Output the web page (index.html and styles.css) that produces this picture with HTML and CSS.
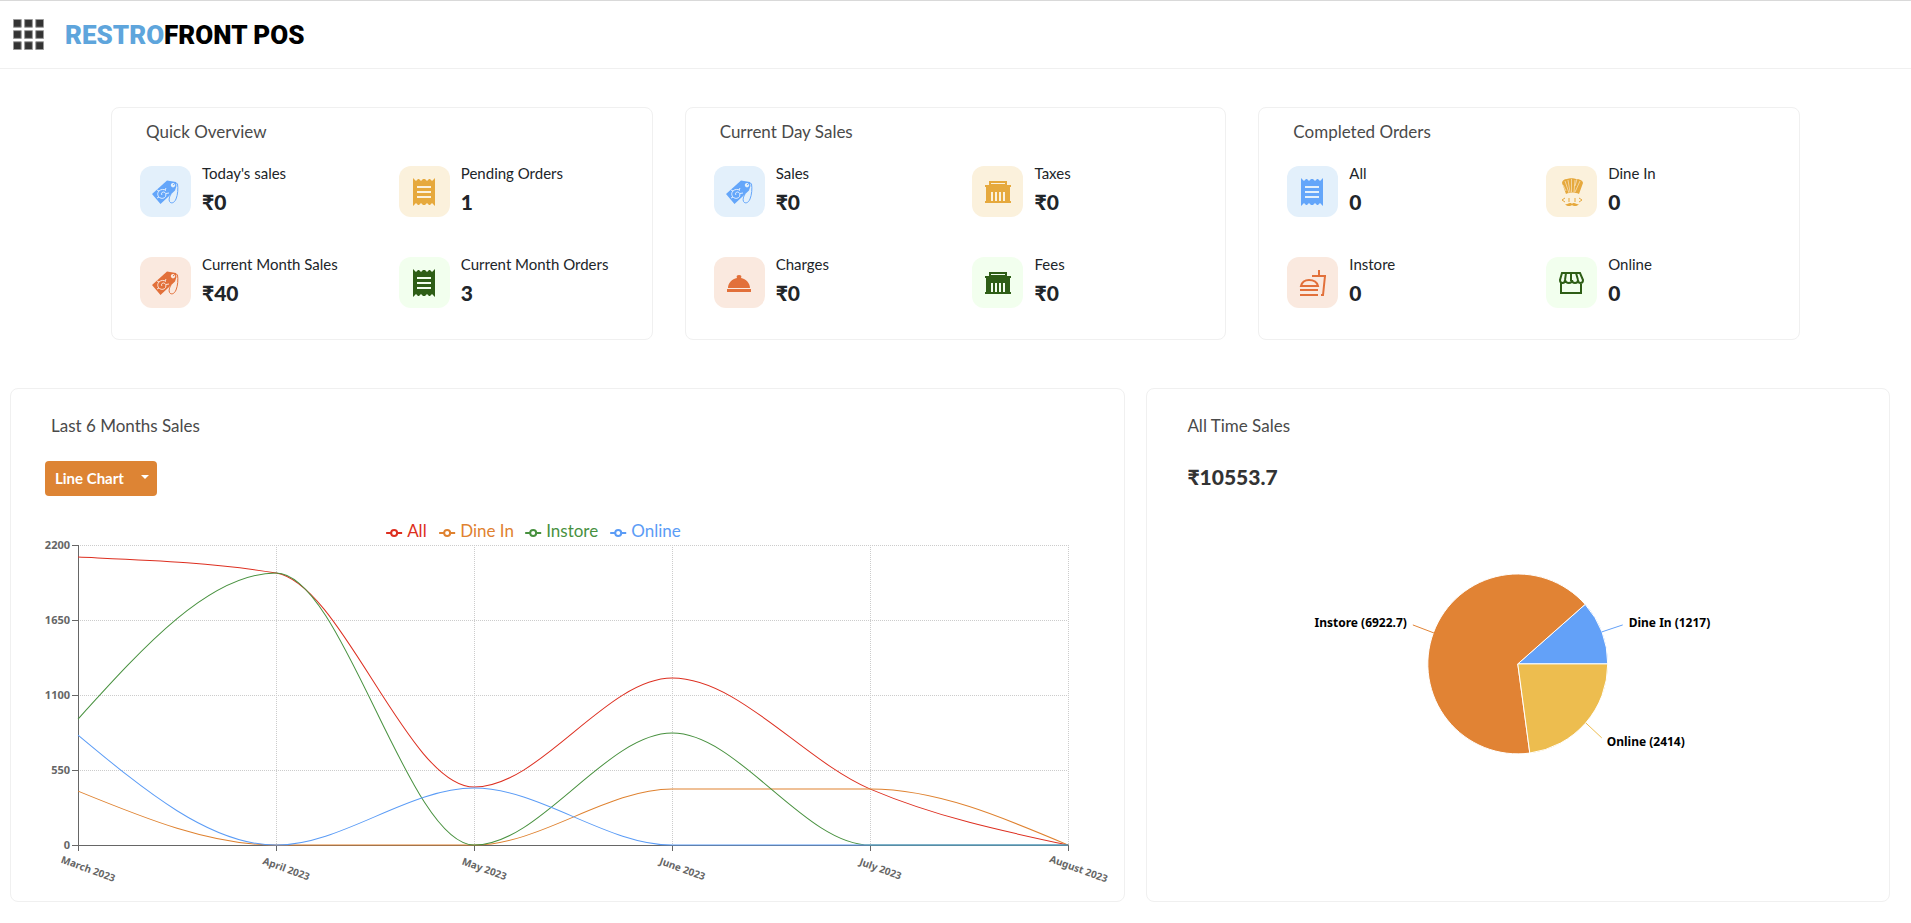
FILE: index.html
```
<!DOCTYPE html>
<html lang="en">
<head>
    <meta charset="UTF-8">
    <meta name="viewport" content="width=device-width, initial-scale=1.0">
    <title>Restrofront POS</title>
    <link rel="stylesheet" href="styles.css">
</head>
<body>
    <!-- icons shared by the tiles -->
    <svg class="sprite" aria-hidden="true">
        <symbol id="tag" viewBox="0 0 51 51">
            <path fill="currentColor" fill-rule="evenodd" d="M12 28 27 14.5 36 16 36.5 20 35 24.5 20.5 38ZM33 17a2.2 2.2 0 1 0 .01 0Z"/>
            <path class="cut" d="M26 24.5c-2-1.5-5-1.5-7 .5s-1.5 5 .5 6.5 5 1 6-1 0-4.5-2-4.5-2.5 2-1.5 3M17 24l2 1M26 22l-1 2M17 32l2-1M29 27l-3 .5"/>
            <path class="line thin" d="M33 19c2-2 4-2.5 4.5-1 .8 4 .3 11-1.5 15-1.5 4-5 5-6.5 2.5-1-2 0-5 1.5-7.5"/>
        </symbol>
        <symbol id="receipt" viewBox="0 0 51 51">
            <path fill="currentColor" fill-rule="evenodd" d="M14 12l3 3 2-2h1l2 2 2-2h2l2 2 2-2h1l2 2 3-3v28l-3-3-2 2h-1l-2-2-2 2h-2l-2-2-2 2h-1l-2-2-3 3ZM18 20v2h14v-2ZM18 25v2h14v-2ZM18 30v2h14v-2Z"/>
        </symbol>
        <symbol id="bank" viewBox="0 0 51 51">
            <path fill="currentColor" fill-rule="evenodd" d="M17 15h18v4h4v2h-1v14h1v2H13v-2h1V21h-1v-2h4ZM19 17v1h14v-1ZM19 26v9h2v-9ZM23 26v9h2v-9ZM27 26v9h2v-9ZM31 26v9h2v-9Z"/>
        </symbol>
        <symbol id="cloche" viewBox="0 0 51 51">
            <path fill="currentColor" d="M14 31c0-5 4-9 9-10-1-2 0-3 2-3s3 1 2 3c5 1 9 5 9 10ZM13 32h24v3H13Z"/>
        </symbol>
        <symbol id="chef" viewBox="0 0 51 51">
            <path fill="currentColor" d="M20 28 16 17c0-2 2-4 5-4 2-1 7-1 9 0 4 0 7 2 7 4l-4 11c-4-2-9-2-13 0Z"/>
            <path class="cut faint" d="M19 15l4 12M22 14l2 12M25.5 13v13M29 14l-1 12M34 15l-5 11M31 13l-2 7M17 19l3 6"/>
            <path class="line thin" d="M19 32l-3 2 3 2M33 32l3 2-3 2M22 33h2M28 33h2M22 35h2M28 35h2"/>
            <path fill="currentColor" d="M19 38c2 1 3-1 5-1 1 0 2 .5 2 1 0-.5 1-1 2-1 2 0 3 2 5 1-1 2-5 3-7 1-2 2-6 1-7-1Z"/>
        </symbol>
        <symbol id="fastfood" viewBox="0 0 51 51">
            <path class="line" d="M14 29c1-4 4-6 8-6s8 2 9 6ZM13 33h18M13 38h18M25 19h14M32 13v6M38 19l-2 19h-2"/>
        </symbol>
        <symbol id="store" viewBox="0 0 51 51">
            <path class="line" d="M15 26v10h20V26M16 16h18l3 7c0 4-5 4-5 0 0 4-6 4-6 0 0 4-6 4-7 0 0 4-5 4-5 0ZM20 16l-1 7M25 16v8M30 16l2 7"/>
        </symbol>
    </svg>

    <header class="navbar">
        <button class="menu" aria-label="Open menu">
            <svg width="31" height="31" viewBox="0 0 32 32" fill="#333" stroke="#999">
                <path d="M.5.5h8v8h-8ZM12 .5h8v8h-8ZM23.5.5h8v8h-8ZM.5 12h8v8h-8ZM12 12h8v8h-8ZM23.5 12h8v8h-8ZM.5 23.5h8v8h-8ZM12 23.5h8v8h-8ZM23.5 23.5h8v8h-8Z"/>
            </svg>
        </button>
        <div class="logo"><span>RESTRO</span>FRONT POS</div>
    </header>

    <main>
        <section class="overview">
            <div class="card">
                <h2>Quick Overview</h2>
                <div class="stats">
                    <div class="stat">
                        <svg class="tile blue"><use href="#tag"/></svg>
                        <div><p class="label">Today's sales</p><p class="value">₹0</p></div>
                    </div>
                    <div class="stat">
                        <svg class="tile yellow"><use href="#receipt"/></svg>
                        <div><p class="label">Pending Orders</p><p class="value">1</p></div>
                    </div>
                    <div class="stat">
                        <svg class="tile orange"><use href="#tag"/></svg>
                        <div><p class="label">Current Month Sales</p><p class="value">₹40</p></div>
                    </div>
                    <div class="stat">
                        <svg class="tile green"><use href="#receipt"/></svg>
                        <div><p class="label">Current Month Orders</p><p class="value">3</p></div>
                    </div>
                </div>
            </div>

            <div class="card">
                <h2>Current Day Sales</h2>
                <div class="stats">
                    <div class="stat">
                        <svg class="tile blue"><use href="#tag"/></svg>
                        <div><p class="label">Sales</p><p class="value">₹0</p></div>
                    </div>
                    <div class="stat">
                        <svg class="tile yellow"><use href="#bank"/></svg>
                        <div><p class="label">Taxes</p><p class="value">₹0</p></div>
                    </div>
                    <div class="stat">
                        <svg class="tile orange"><use href="#cloche"/></svg>
                        <div><p class="label">Charges</p><p class="value">₹0</p></div>
                    </div>
                    <div class="stat">
                        <svg class="tile green"><use href="#bank"/></svg>
                        <div><p class="label">Fees</p><p class="value">₹0</p></div>
                    </div>
                </div>
            </div>

            <div class="card">
                <h2>Completed Orders</h2>
                <div class="stats">
                    <div class="stat">
                        <svg class="tile blue"><use href="#receipt"/></svg>
                        <div><p class="label">All</p><p class="value">0</p></div>
                    </div>
                    <div class="stat">
                        <svg class="tile yellow"><use href="#chef"/></svg>
                        <div><p class="label">Dine In</p><p class="value">0</p></div>
                    </div>
                    <div class="stat">
                        <svg class="tile orange"><use href="#fastfood"/></svg>
                        <div><p class="label">Instore</p><p class="value">0</p></div>
                    </div>
                    <div class="stat">
                        <svg class="tile green"><use href="#store"/></svg>
                        <div><p class="label">Online</p><p class="value">0</p></div>
                    </div>
                </div>
            </div>
        </section>

        <section class="charts">
            <div class="card">
                <div class="chart-head">
                    <h2>Last 6 Months Sales</h2>
                    <div class="select">
                        <select aria-label="Chart type">
                            <option>Line Chart</option>
                            <option>Bar Chart</option>
                        </select>
                    </div>
                </div>
                <svg class="chart" viewBox="0 0 1113 376" role="img" aria-label="Sales of the last 6 months">
                    <!-- origin is the top left corner of the plot -->
                    <g transform="translate(67 31)">
                        <path class="grid" d="M0 0H990M0 75H990M0 150H990M0 225H990M198 0V300M396 0V300M594 0V300M792 0V300M990 0V300"/>
                        <path class="axis" d="M0 0V300H990M-6 0H0M-6 75H0M-6 150H0M-6 225H0M-6 300H0M0 300V306M198 300V306M396 300V306M594 300V306M792 300V306M990 300V306"/>

                        <g class="series">
                            <path stroke="#dd2f20" d="M0 12C66 15 132 17 198 28C264 39 330 242 396 242C462 242 528 133 594 133C660 133 726 216 792 244C858 272 924 286 990 300"/>
                            <path stroke="#df8230" d="M0 246C66 273 132 300 198 300H396C462 300 528 244 594 244H792C858 244 924 272 990 300"/>
                            <path stroke="#48913f" d="M0 174C66 101 132 28 198 28C264 28 330 300 396 300C462 300 528 188 594 188C660 188 726 300 792 300H990"/>
                            <path stroke="#5b9cf6" d="M0 190C66 245 132 300 198 300C264 300 330 243 396 243C462 243 528 300 594 300H990"/>
                        </g>

                        <g class="tick y">
                            <text x="-8" y="4">2200</text>
                            <text x="-8" y="79">1650</text>
                            <text x="-8" y="154">1100</text>
                            <text x="-8" y="229">550</text>
                            <text x="-8" y="304">0</text>
                        </g>
                        <g class="tick x">
                            <text transform="translate(9 327) rotate(20)">March 2023</text>
                            <text transform="translate(207 327) rotate(20)">April 2023</text>
                            <text transform="translate(405 327) rotate(20)">May 2023</text>
                            <text transform="translate(603 327) rotate(20)">June 2023</text>
                            <text transform="translate(801 327) rotate(20)">July 2023</text>
                            <text transform="translate(999 327) rotate(20)">August 2023</text>
                        </g>

                        <g class="legend">
                            <g color="#dd2f20"><path d="M308-12h5M319-12h5"/><circle cx="316" cy="-12" r="3"/><text x="329" y="-8">All</text></g>
                            <g color="#df8230"><path d="M361-12h5M372-12h5"/><circle cx="369" cy="-12" r="3"/><text x="382" y="-8">Dine In</text></g>
                            <g color="#48913f"><path d="M447-12h5M458-12h5"/><circle cx="455" cy="-12" r="3"/><text x="468" y="-8">Instore</text></g>
                            <g color="#5b9cf6"><path d="M532-12h5M543-12h5"/><circle cx="540" cy="-12" r="3"/><text x="553" y="-8">Online</text></g>
                        </g>
                    </g>
                </svg>
            </div>

            <div class="card">
                <div class="chart-head">
                    <h2>All Time Sales</h2>
                    <p class="total">₹10553.7</p>
                </div>
                <svg class="chart" viewBox="0 0 742 376" role="img" aria-label="All time sales by order type">
                    <!-- origin is the centre of the pie -->
                    <g transform="translate(371 150)">
                        <g class="slices">
                            <path fill="#63a1f8" d="M0 0H90A90 90 0 0 0 67.4-59.6Z"/>
                            <path fill="#e18334" d="M0 0 67.4-59.6A90 90 0 1 0 12 89.2Z"/>
                            <path fill="#edbd4f" d="M0 0 12 89.2A90 90 0 0 0 90 0Z"/>
                        </g>
                        <g class="series">
                            <path stroke="#63a1f8" d="M84-32 105-39"/>
                            <path stroke="#e18334" d="M-84-31-105-39"/>
                            <path stroke="#edbd4f" d="M68 59 84 74"/>
                        </g>
                        <g class="slice-label">
                            <text x="111" y="-37">Dine In (1217)</text>
                            <text x="-111" y="-37" text-anchor="end">Instore (6922.7)</text>
                            <text x="89" y="82">Online (2414)</text>
                        </g>
                    </g>
                </svg>
            </div>
        </section>
    </main>
</body>
</html>
```
FILE: styles.css
```
* {
    box-sizing: border-box;
}

body {
    margin: 0;
    background: #fff;
    color: #212529;
    font-family: Lato, "Noto Sans", sans-serif;
}

h2,
p {
    margin: 0;
}

.sprite {
    display: none;
}

.navbar {
    display: flex;
    align-items: center;
    gap: 21px;
    height: 69px;
    padding: 0 13px;
    border-top: 1px solid #d9d9d9;
    border-bottom: 1px solid #f0f0f0;
}

.menu {
    display: flex;
    padding: 0;
    border: none;
    background: none;
    cursor: pointer;
}

.logo {
    color: #000;
    font-family: Roboto, sans-serif;
    font-size: 26px;
    font-weight: 900;
}

.logo span {
    color: #5ea5dc;
}

.card {
    border: 1px solid #f0f0f0;
    border-radius: 8px;
}

.card h2 {
    color: #4a4a4a;
    font-size: 17px;
    font-weight: 400;
    line-height: 24px;
}

.overview {
    display: grid;
    grid-template-columns: repeat(3, 1fr);
    gap: 32px;
    padding: 38px 111px 0;
}

.overview .card {
    padding: 12px 11px 31px;
}

.overview h2 {
    padding-left: 23px;
}

.stats {
    display: grid;
    grid-template-columns: 1fr 1fr;
    row-gap: 40px;
    margin-top: 22px;
}

.stat {
    display: flex;
    gap: 11px;
    padding-left: 17px;
}

.tile {
    flex: none;
    width: 51px;
    height: 51px;
    border-radius: 12px;
}

.blue {
    color: #64a6fa;
    background: #e3f0fb;
}

.yellow {
    color: #e6a93d;
    background: #fbf1dc;
}

.orange {
    color: #e2703a;
    background: #fae9df;
}

.green {
    color: #2e5e16;
    background: #f2ffee;
}

.line {
    fill: none;
    stroke: currentColor;
    stroke-width: 2px;
}

.thin {
    stroke-width: 1px;
}

.cut {
    fill: none;
    stroke: #fff;
    stroke-opacity: 0.8;
    stroke-width: 1px;
}

.faint {
    stroke-opacity: 0.5;
}

.label {
    font-size: 15px;
    line-height: 14px;
}

.value,
.total {
    font-size: 21px;
    font-weight: 900;
    line-height: 24px;
}

.value {
    margin-top: 10px;
}

.charts {
    display: grid;
    grid-template-columns: 3fr 2fr;
    gap: 21px;
    padding: 48px 21px 16px 10px;
}

.charts .card {
    padding-bottom: 11px;
}

.chart-head {
    height: 125px;
    padding: 25px 40px 0;
}

.total {
    margin-top: 27px;
    color: #333;
}

.select {
    position: relative;
    width: 112px;
    height: 35px;
    margin: 23px 0 0 -6px;
}

.select select {
    width: 100%;
    height: 100%;
    padding: 0 10px 2px;
    border: none;
    border-radius: 4px;
    background: #dd8434;
    color: #fff;
    font-family: inherit;
    font-size: 15px;
    font-weight: 700;
    appearance: none;
    cursor: pointer;
}

.select::after {
    content: '';
    position: absolute;
    top: 14px;
    right: 8px;
    border: 4px solid transparent;
    border-top-color: #fff;
    border-bottom: none;
    pointer-events: none;
}

.chart {
    display: block;
    width: 100%;
}

.grid {
    stroke: #ccc;
    stroke-dasharray: 1 1;
    shape-rendering: crispEdges;
}

.axis {
    fill: none;
    stroke: #666;
    shape-rendering: crispEdges;
}

.series {
    fill: none;
}

.tick {
    fill: #666;
    font-family: "Noto Sans", sans-serif;
    font-size: 10px;
    font-weight: 700;
}

.y {
    font-size: 11px;
    text-anchor: end;
}

.x {
    text-anchor: middle;
}

.legend text {
    fill: currentColor;
    font-size: 17px;
}

.legend path,
.legend circle {
    fill: none;
    stroke: currentColor;
    stroke-width: 2px;
}

.slices {
    stroke: #fff;
}

.slice-label {
    fill: #000;
    font-family: "Noto Sans", sans-serif;
    font-size: 12px;
    font-weight: 700;
}
```
